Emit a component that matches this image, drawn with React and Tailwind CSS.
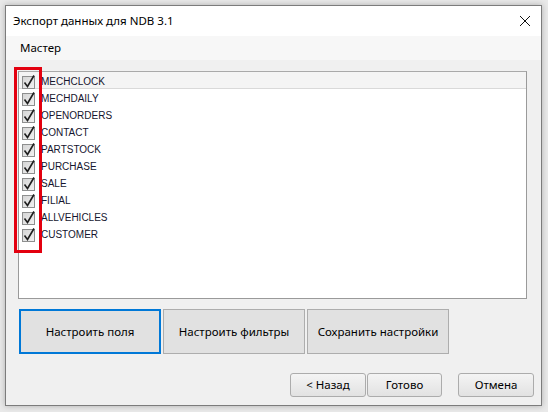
import React from 'react';

const tables = [
  'MECHCLOCK',
  'MECHDAILY',
  'OPENORDERS',
  'CONTACT',
  'PARTSTOCK',
  'PURCHASE',
  'SALE',
  'FILIAL',
  'ALLVEHICLES',
  'CUSTOMER',
];

const CheckBox = () => (
  <svg width="15" height="15" viewBox="0 0 15 15" className="shrink-0 mt-[2px]">
    <defs>
      <linearGradient id="cbfill" x1="0" y1="0" x2="1" y2="1">
        <stop offset="0" stopColor="#d4d4d4" />
        <stop offset="1" stopColor="#f2f2f2" />
      </linearGradient>
    </defs>
    <rect x="1.5" y="2.5" width="12" height="12" fill="url(#cbfill)" stroke="#8e8f8f" />
    <path d="M3.5 8.5 L6.5 12.5 L13 1.5" fill="none" stroke="#1f1f1f" strokeWidth="1.6" />
  </svg>
);

const App = () => {
  return (
    <div
      className="w-[548px] h-[412px] bg-[#e9e9e9] pt-[5px] pl-[5px] relative overflow-hidden"
      style={{ fontFamily: '"Noto Sans", "Liberation Sans", sans-serif' }}
    >
      <div className="w-[537px] h-[401px] border border-[#7c7c7c] bg-[#f0f0f0] flex flex-col shadow-[0_0_6px_rgba(0,0,0,0.25)]">
        {/* title bar */}
        <div className="h-[30px] bg-white flex items-center justify-between pl-[7px] pr-[10px]">
          <span className="text-[11.5px] text-black">Экспорт данных для NDB 3.1</span>
          <svg width="12" height="12" viewBox="0 0 12 12">
            <path d="M1 1 L11 11 M11 1 L1 11" stroke="#111" strokeWidth="1" />
          </svg>
        </div>

        {/* wizard header */}
        <div className="h-[24px] bg-[#f7f7f7] flex items-center pl-[14px]">
          <span className="text-[11.5px] text-black">Мастер</span>
        </div>

        <div className="flex-1 flex flex-col pl-[12px] pr-[14px] pt-[11px]">
          {/* list of tables */}
          <div className="h-[228px] bg-white border border-[#9a9a9a] border-t-[#a9a9a9]">
            {tables.map((name, index) => (
              <div
                key={name}
                className={
                  index === 0
                    ? 'h-[17px] flex items-center pl-[2px] bg-[#f4f4f4] border-b border-[#d9d9d9]'
                    : 'h-[17px] flex items-center pl-[2px]'
                }
              >
                <CheckBox />
                <span
                  className="ml-[5px] mt-[3px] text-[10px] text-[#15152e] leading-none"
                  style={{ fontFamily: '"Liberation Sans", Arial, sans-serif' }}
                >
                  {name}
                </span>
              </div>
            ))}
          </div>

          {/* settings buttons */}
          <div className="flex gap-[2px] mt-[10px] pl-[1px]">
            <button className="w-[142px] h-[45px] bg-[#e1e1e1] border-2 border-[#0078d7] text-[11.5px] text-black">
              Настроить поля
            </button>
            <button className="w-[142px] h-[45px] bg-[#e1e1e1] border border-[#adadad] text-[11.5px] text-black">
              Настроить фильтры
            </button>
            <button className="w-[142px] h-[45px] bg-[#e1e1e1] border border-[#adadad] text-[11.5px] text-black">
              Сохранить настройки
            </button>
          </div>

          {/* navigation */}
          <div className="flex justify-end mt-[19px] -mr-[7px]">
            <button className="w-[76px] h-[24px] rounded-[3px] border border-[#acacac] bg-gradient-to-b from-[#f4f4f4] to-[#e2e2e2] text-[11.5px] text-black">
              &lt; Назад
            </button>
            <button className="w-[75px] h-[24px] ml-[1px] rounded-[3px] border border-[#acacac] bg-gradient-to-b from-[#f4f4f4] to-[#e2e2e2] text-[11.5px] text-black">
              Готово
            </button>
            <button className="w-[76px] h-[24px] ml-[16px] rounded-[3px] border border-[#acacac] bg-gradient-to-b from-[#f4f4f4] to-[#e2e2e2] text-[11.5px] text-black">
              Отмена
            </button>
          </div>
        </div>
      </div>

      {/* red highlight over the checkbox column */}
      <div className="absolute left-[14px] top-[67px] w-[28px] h-[186px] border-[3px] border-[#e3000f] pointer-events-none" />
    </div>
  );
};

export default App;
